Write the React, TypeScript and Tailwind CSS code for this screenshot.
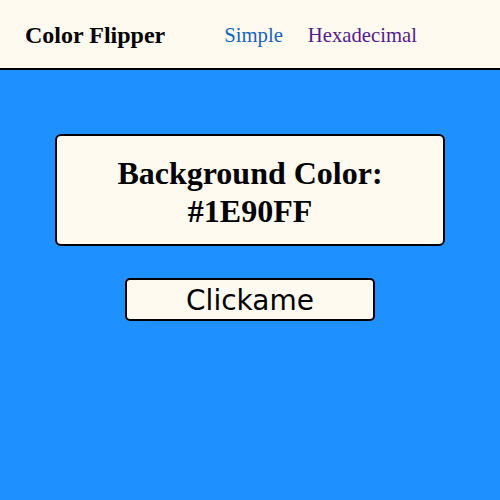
import React from "react";

export default function App() {
  return (
    <div className="w-[500px] h-[500px] bg-[#1e90ff] flex flex-col font-['Liberation_Serif',serif]">
      <nav className="h-[70px] bg-[#fffaf0] border-b-2 border-black flex items-center pl-[25px] pt-[2px]">
        <h1 className="text-[24px] font-bold text-black m-0 font-['Liberation_Serif',serif]">Color Flipper</h1>
        <a className="ml-[59px] mt-[2px] text-[20.7px] text-[#1565c0] font-['Liberation_Serif',serif]">Simple</a>
        <a className="ml-[25px] mt-[2px] text-[20.7px] text-[#551a8b] font-['Liberation_Serif',serif]">Hexadecimal</a>
      </nav>
      <div className="flex flex-col items-center pt-[64px]">
        <div className="w-[390px] h-[112px] bg-[#fffaf0] border-2 border-black rounded-[6px] flex items-center justify-center pt-[3px]">
          <h2 className="text-[32px] font-bold leading-[38px] text-center text-black font-['Liberation_Serif',serif]">
            Background Color:
            <br />
            #1E90FF
          </h2>
        </div>
        <button className="mt-[32px] w-[250px] h-[43px] bg-[#fffaf0] border-2 border-black rounded-[5px] text-[28px] leading-none text-black flex items-center justify-center pt-[3px] font-['DejaVu_Sans',sans-serif]">
          Clickame
        </button>
      </div>
    </div>
  );
}
